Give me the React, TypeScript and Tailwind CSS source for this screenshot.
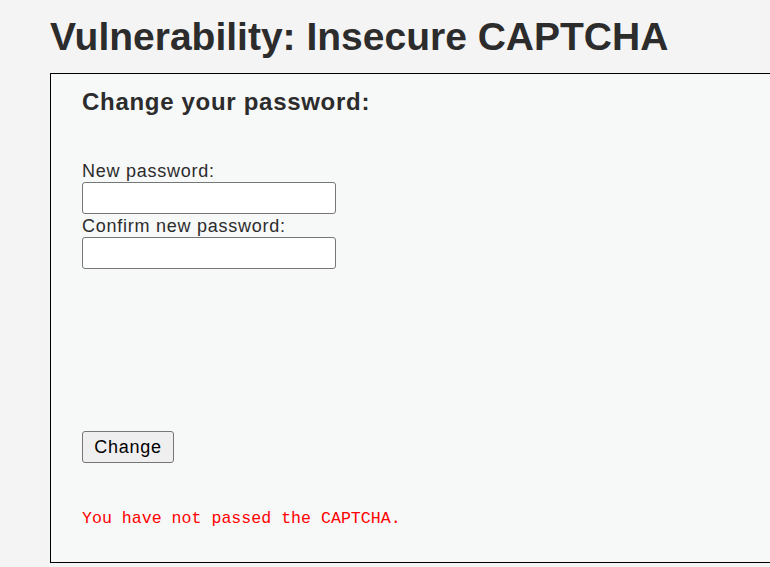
export default function App() {
  return (
    <div className="h-[567px] w-[770px] overflow-hidden bg-[#f4f4f4] pl-[50px] pt-[17px] font-['Liberation_Sans',Arial,sans-serif] text-[#2c2c2c]">
      <h1 className="text-[39px] font-bold leading-[39px]">Vulnerability: Insecure CAPTCHA</h1>

      <div className="mt-[17px] h-[490px] w-[760px] border border-black bg-[#f7f8f8] pl-[31px]">
        <h3 className="mt-[14px] text-[24px] font-bold leading-[28px] tracking-[0.7px]">Change your password:</h3>

        <form className="mt-[44px]" onSubmit={(e) => e.preventDefault()}>
          <div className="text-[18px] leading-[22px] tracking-[0.75px]">New password:</div>
          <input
            type="password"
            className="block h-[32px] w-[254px] rounded-[3px] border border-[#767676] bg-white"
          />
          <div className="mt-[1px] text-[18px] leading-[22px] tracking-[0.75px]">Confirm new password:</div>
          <input
            type="password"
            className="block h-[32px] w-[254px] rounded-[3px] border border-[#767676] bg-white"
          />

          <button
            type="submit"
            className="mt-[162px] h-[32px] w-[92px] rounded-[3px] border border-[#767676] bg-[#efefef] text-[18px] tracking-[0.75px] text-black"
          >
            Change
          </button>
        </form>

        <pre className="mt-[46px] font-['Liberation_Mono',monospace] text-[16.6px] leading-[19px] text-[#ff0000]">
          You have not passed the CAPTCHA.
        </pre>
      </div>
    </div>
  )
}
